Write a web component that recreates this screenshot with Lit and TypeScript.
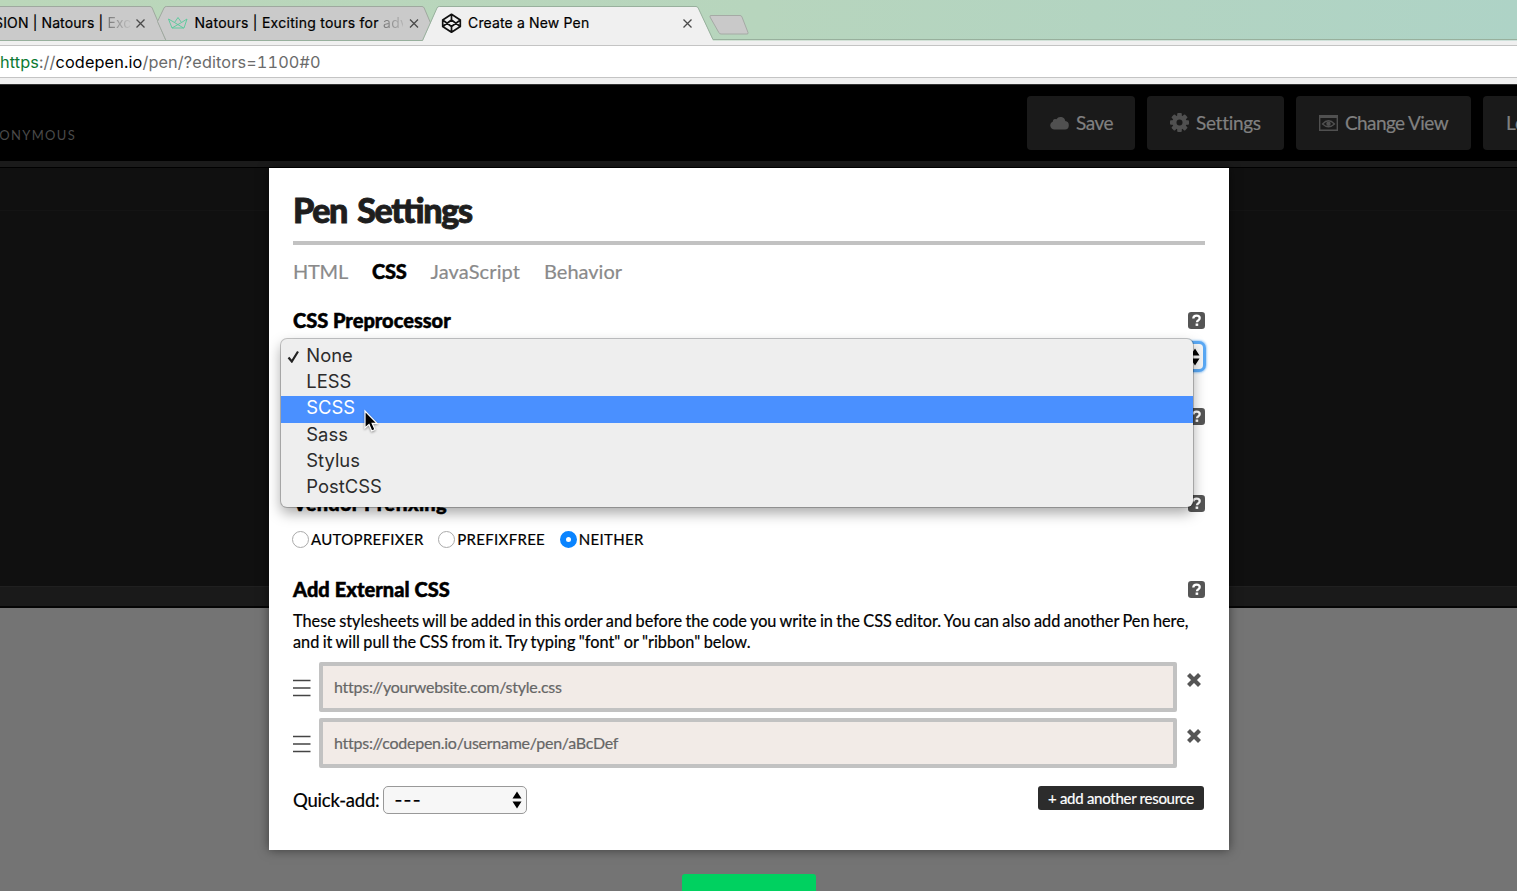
import { LitElement, html, css, svg } from "lit";
import { customElement } from "lit/decorators.js";
import { classMap } from "lit/directives/class-map.js";

const helpIcon = html`<svg class="help" viewBox="0 0 17 17" width="17" height="17">
  <rect x="0" y="0" width="17" height="17" rx="3.2" fill="#555"></rect>
  <path d="M5.3 6.500C5.400 4.500 6.600 3.600 8.500 3.600c1.900 0 3.200.9 3.200 2.500 0 1.300-.8 1.800-1.600 2.400-.8.5-1.100.8-1.100 1.700" fill="none" stroke="#fff" stroke-width="2.300"></path>
  <rect x="7.600" y="11.500" width="2.600" height="2.400" fill="#fff"></rect>
</svg>`;

const arrows = html`<svg class="arrows" viewBox="0 0 10 18" width="10" height="18">
  <path d="M5 .5 9.500 7.500H.5zM5 17.500 9.500 10.500H.5z" fill="#000"></path>
</svg>`;

const closeGlyph = (x: number) => svg`<path d="M${x - 4} 19.500l8 8M${x + 4} 19.500l-8 8" stroke="#4a4a4a" stroke-width="1.300" fill="none"></path>`;

@customElement("browser-chrome")
class BrowserChrome extends LitElement {
  static styles = css`
    :host { display: block; font-family: Inter, "Noto Sans", sans-serif; color: #000; }
    .strip { position: relative; height: 41px; background: linear-gradient(90deg, #bbd7ba 0, #b7d5bd 50%, #aed3c6 100%); overflow: hidden; }
    .shapes { display: block; }
    .label { position: absolute; top: 12px; height: 22px; line-height: 22px; font-size: 14px; white-space: pre; overflow: hidden; -webkit-text-stroke: 0.2px; }
    .t1 { right: 1385.500px; width: 200px; text-align: right; letter-spacing: 0.12px; }
    .t2 { left: 194.500px; width: 208px; letter-spacing: 0.27px; }
    .t3 { left: 468px; letter-spacing: 0.15px; }
    .fade { color: transparent; -webkit-text-stroke: 0; background: linear-gradient(90deg, #777, #c4c4c4); -webkit-background-clip: text; background-clip: text; }
    .bar { box-sizing: border-box; height: 43px; padding: 4px 0 6px; background: #f0f0f0; }
    .address { box-sizing: border-box; height: 33px; line-height: 33px; border-top: 1px solid #c4c4c4; border-bottom: 1px solid #c4c4c4; background: #fff; font-size: 16.300px; font-feature-settings: "tnum"; letter-spacing: 0.12px; color: #6b6b6b; white-space: pre; }
    .secure { color: #0b7a33; }
    .domain { color: #000; }
  `;
  render() {
    return html`
      <div class="strip">
        <svg class="shapes" width="1517" height="41" viewBox="0 0 1517 41">
          <path d="M-5 6.500H150q1.500 0 2.200 1.500L166 40.500H-5z" fill="#cacaca" stroke="#9fa89f"></path>
          <path d="M157.500 21.500 164 8q.7-1.500 2.200-1.500H422q1.500 0 2.200 1.500L438 40.500H166z" fill="#cacaca" stroke="#9fa89f"></path>
          <path d="M0 40.500H423L437 8q.7-1.500 2.200-1.500H696q1.500 0 2.200 1.500L713 40.500H1517V42H0z" fill="#f0f0f0"></path>
          <path d="M0 40.500H422.500L437 8q.7-1.500 2.200-1.500H696q1.500 0 2.200 1.500L713 39.500H1517" fill="none" stroke="#98b09d"></path>
          <path d="M711 15.500h29q1.500 0 2 1.500l6 15.500q.5 1.500-1 1.500h-26q-1.500 0-2.200-1.500l-8.800-15.500q-.5-1.500 1-1.500z" fill="#c9c9c9" stroke="#a5aaa5"></path>
          ${closeGlyph(140.5)}${closeGlyph(414)}${closeGlyph(687.5)}
          <g fill="none" stroke="#55c99a" stroke-width="0.900">
            <path d="M168.500 19l3.500 9h12l3-9-5.500 3.500-3.500-5-3.500 5zM174.500 22.500l9 5.500M181.500 22.500L172 28"></path>
          </g>
          <g fill="none" stroke="#111" stroke-width="1.700" stroke-linejoin="round">
            <path d="M451.500 14.300l8.800 5.700v6.500l-8.800 5.700-8.800-5.700V20zM451.500 14.300v5.500M451.500 26.700v5.500M442.700 20l8.800 6.500 8.800-6.500M442.700 26.500l8.800-6.500 8.800 6.500"></path>
          </g>
        </svg>
        <div class="label t1">SION | Natours | <span class="fade">Exc</span></div>
        <div class="label t2">Natours | Exciting tours for <span class="fade">adv</span></div>
        <div class="label t3">Create a New Pen</div>
      </div>
      <div class="bar">
        <div class="address"><span class="secure">https</span>://<span class="domain">codepen.io</span>/pen/?editors=1100#0</div>
      </div>`;
  }
}

@customElement("pen-header")
class PenHeader extends LitElement {
  static styles = css`
    :host { display: flex; box-sizing: border-box; height: 77px; background: #000; border-top: 1px solid #333; font-family: Lato, sans-serif; justify-content: space-between; overflow: hidden; }
    .author { width: 300px; flex: none; margin-left: -224px; padding-top: 40px; font-size: 13px; line-height: 20px; letter-spacing: 1.300px; color: #4a4a4a; text-align: right; white-space: nowrap; }
    .actions { display: flex; flex: none; width: 490px; gap: 12px; padding-top: 11px; }
    .btn { box-sizing: border-box; display: flex; align-items: center; flex: none; height: 53.500px; padding-left: 23px; gap: 7px; border-radius: 4px; background: #1a1a1a; color: #808080; font-size: 19px; white-space: nowrap; -webkit-text-stroke: 0.2px; }
    .save { width: 108px; letter-spacing: -0.5px; }
    .settings { width: 137px; letter-spacing: -0.300px; }
    .view { width: 175px; letter-spacing: -0.600px; }
    .login { width: 100px; }
    svg { flex: none; }
  `;
  render() {
    return html`
      <div class="author">A PEN BY ANONYMOUS</div>
      <div class="actions">
        <div class="btn save">
          <svg width="19" height="14" viewBox="0 0 19 14"><path d="M4.500 13.500a4.200 4.200 0 0 1-1.600-8.100 2.400 2.400 0 0 1 3.500-2.200A4.900 4.900 0 0 1 15.300 5 4.300 4.300 0 0 1 15 13.500z" fill="#505050"></path></svg>
          <span>Save</span>
        </div>
        <div class="btn settings">
          <svg width="19" height="19" viewBox="0 0 19 19"><g fill="#505050">${[0, 45, 90, 135].map((a) => svg`<rect x="7.200" y="0" width="4.600" height="19" rx="1" transform="rotate(${a} 9.5 9.5)"></rect>`)}<circle cx="9.500" cy="9.500" r="7.200"></circle></g><circle cx="9.500" cy="9.500" r="3" fill="#1a1a1a"></circle></svg>
          <span>Settings</span>
        </div>
        <div class="btn view">
          <svg width="19" height="16" viewBox="0 0 19 16"><path d="M.7 1.500h17.600v13.700H.7z" fill="none" stroke="#505050" stroke-width="1.400"></path><path d="M0 0h19v3H0z" fill="#505050"></path><path d="M3.500 9Q9.500 2.500 15.500 9 9.500 14.500 3.500 9z" fill="none" stroke="#505050" stroke-width="1.300"></path><circle cx="9.500" cy="8.800" r="2.200" fill="#505050"></circle></svg>
          <span>Change View</span>
        </div>
        <div class="btn login"><span>Log In</span></div>
      </div>`;
  }
}

@customElement("settings-modal")
class SettingsModal extends LitElement {
  static styles = css`
    :host { display: flex; flex-direction: column; box-sizing: border-box; width: 960px; height: 682px; padding: 0 24px; background: #fff; box-shadow: 0 0 10px rgba(0, 0, 0, 0.5); font-family: Lato, sans-serif; color: #000; white-space: nowrap; -webkit-text-stroke: 0.2px; }
    .title { box-sizing: border-box; height: 77px; padding-top: 18px; border-bottom: 4px solid #c2c2c2; margin: 0; font-size: 34px; line-height: 48px; font-weight: 900; letter-spacing: -1.350px; word-spacing: 3.500px; font-feature-settings: "liga"; color: #1e1e1e; -webkit-text-stroke: 0.900px; }
    .tabs { display: flex; align-items: center; height: 52px; gap: 24px; font-size: 20px; color: #8a8a8a; }
    .tab-h { letter-spacing: -0.250px; }
    .tab-j { letter-spacing: 0.120px; }
    .active { font-weight: 900; letter-spacing: -0.200px; color: #000; -webkit-text-stroke: 0.5px; }
    .heading { display: flex; flex: none; align-items: center; justify-content: space-between; height: 30px; font-size: 20px; font-weight: 900; -webkit-text-stroke: 0.5px; }
    .h1 { margin-top: 8px; }
    .select { box-sizing: border-box; display: flex; flex: none; align-items: center; justify-content: flex-end; height: 25px; margin-top: 9px; margin-right: 2px; padding-right: 3px; border-radius: 4px; background: #f7f7f7; box-shadow: 0 0 0 3px #5aa9f5, 0 0 2px 4px #a9d3fb; }
    .h2 { margin-top: 32px; }
    .h3 { margin-top: 57px; letter-spacing: 0.250px; }
    .h4 { margin-top: 14px; letter-spacing: 0.060px; }
    .radios { display: flex; align-items: center; height: 42px; font-size: 15px; letter-spacing: 0.31px; }
    .radio { display: flex; align-items: center; gap: 2px; margin-right: 15.700px; }
    .dot { box-sizing: border-box; width: 17px; height: 17px; margin-left: -1px; border: 1px solid #aaa; border-radius: 50%; background: #fff; }
    .on { border: 6px solid #0a84ff; }
    .note { flex: none; margin: 7px 0 10px; font-size: 16.300px; word-spacing: -0.750px; line-height: 20.600px; height: 41px; }
    .row { display: flex; flex: none; height: 50px; margin-bottom: 6.300px; }
    .grip { flex: none; margin: 17px 8px 0 0; }
    .field { box-sizing: border-box; width: 858px; flex: none; padding-left: 11px; border: 4px solid #c2c2c2; border-radius: 2px; background: #f2ebe7; color: #666; font-size: 16px; letter-spacing: -0.260px; line-height: 41px; }
    .remove { flex: none; margin: 10px 0 0 9px; }
    .footer { display: flex; flex: none; justify-content: space-between; height: 28px; margin-top: 11.400px; padding-right: 1px; }
    .quick { display: flex; align-items: center; gap: 4px; font-size: 18.500px; letter-spacing: -0.220px; }
    .pick { box-sizing: border-box; display: flex; align-items: center; justify-content: space-between; width: 144px; height: 28px; padding: 0 4px 0 10px; border: 1px solid #999; border-radius: 5px; background: #f7f7f7; }
    .dash { font-family: Inter, sans-serif; font-size: 17px; font-weight: 500; letter-spacing: 1.300px; }
    .add { height: 24px; padding: 0 10px; border-radius: 3px; background: #2c2c2c; color: #fff; font-size: 15px; letter-spacing: -0.270px; line-height: 24px; }
  `;
  private row(placeholder: string) {
    return html`<div class="row">
      <svg class="grip" width="18" height="18" viewBox="0 0 18 18"><path d="M0 1.500h17.500M0 9h17.500M0 16.500h17.500" stroke="#444" stroke-width="1.700"></path></svg>
      <div class="field">${placeholder}</div>
      <svg class="remove" width="16" height="16" viewBox="0 0 16 16"><path d="M2.500 2.500l11 11M13.500 2.500l-11 11" stroke="#555" stroke-width="4.200"></path></svg>
    </div>`;
  }
  render() {
    const radio = (name: string, on: boolean) => html`<div class="radio"><span class=${classMap({ dot: true, on })}></span><span>${name}</span></div>`;
    return html`
      <h1 class="title">Pen Settings</h1>
      <div class="tabs"><span class="tab-h">HTML</span><span class="active">CSS</span><span class="tab-j">JavaScript</span><span class="tab-b">Behavior</span></div>
      <div class="heading h1"><span>CSS Preprocessor</span>${helpIcon}</div>
      <div class="select">${arrows}</div>
      <div class="heading h2"><span></span>${helpIcon}</div>
      <div class="heading h3"><span>Vendor Prefixing</span>${helpIcon}</div>
      <div class="radios">${radio("AUTOPREFIXER", false)}${radio("PREFIXFREE", false)}${radio("NEITHER", true)}</div>
      <div class="heading h4"><span>Add External CSS</span>${helpIcon}</div>
      <p class="note">These stylesheets will be added in this order and before the code you write in the CSS editor. You can also add another Pen here,<br />and it will pull the CSS from it. Try typing "font" or "ribbon" below.</p>
      ${this.row("https://yourwebsite.com/style.css")}${this.row("https://codepen.io/username/pen/aBcDef")}
      <div class="footer">
        <div class="quick"><span>Quick-add:</span><div class="pick"><span class="dash">---</span>${arrows}</div></div>
        <div class="add">+ add another resource</div>
      </div>`;
  }
}

@customElement("option-menu")
class OptionMenu extends LitElement {
  static styles = css`
    :host { display: block; box-sizing: border-box; width: 912px; height: 168px; padding-top: 4.500px; border-radius: 6px; background: #eeeeee; box-shadow: 0 0 0 1px rgba(0, 0, 0, 0.22), 0 6px 14px rgba(0, 0, 0, 0.35); font-family: Inter, sans-serif; font-size: 18.400px; color: #2c2c2c; }
    .item { display: flex; height: 26.400px; line-height: 23.400px; }
    .item:first-child { line-height: 22px; }
    .mark { width: 25.300px; flex: none; }
    .check { display: block; margin: 6px 0 0 6px; }
    .hot { background: #4a90ff; color: #fff; }
  `;
  render() {
    return html`${["None", "LESS", "SCSS", "Sass", "Stylus", "PostCSS"].map(
      (name, i) => html`<div class=${classMap({ item: true, hot: i === 2 })}>
        <span class="mark">${i === 0 ? html`<svg class="check" width="13" height="13" viewBox="0 0 13 13"><path d="M1.500 7.500l3.300 4L11 1.500" fill="none" stroke="#222" stroke-width="2.200"></path></svg>` : ""}</span><span>${name}</span>
      </div>`
    )}`;
  }
}

@customElement("app-root")
class AppRoot extends LitElement {
  static styles = css`
    :host { display: block; position: relative; width: 1517px; height: 891px; overflow: hidden; background: #747474; }
    .editors { box-sizing: border-box; height: 447px; border-top: 6px solid #1a1a1a; border-bottom: 2px solid #050505; background: #101010; display: flex; flex-direction: column; justify-content: space-between; }
    .heads { height: 42px; border-top: 1px solid #000; border-bottom: 1px solid #141414; }
    .foot { height: 19px; background: #1a1a1a; border-top: 1px solid #202020; }
    .modal { position: absolute; left: 269px; top: 168px; }
    .menu { position: absolute; left: 281px; top: 339px; }
    .pointer { position: absolute; left: 363px; top: 409px; filter: drop-shadow(0 1px 1px rgba(0, 0, 0, 0.4)); }
    .save { position: absolute; left: 682px; top: 874px; width: 134px; height: 40px; border-radius: 3px; background: #00d160; }
  `;
  render() {
    return html`
      <browser-chrome></browser-chrome>
      <pen-header></pen-header>
      <div class="editors"><div class="heads"></div><div class="foot"></div></div>
      <settings-modal class="modal"></settings-modal>
      <option-menu class="menu"></option-menu>
      <svg class="pointer" width="16" height="24" viewBox="0 0 16 24"><path d="M2 2v17l4-3.600L8.700 22l3.300-1.500-2.800-6.200H14z" fill="#000" stroke="#fff" stroke-width="1.200"></path></svg>
      <div class="save"></div>`;
  }
}
